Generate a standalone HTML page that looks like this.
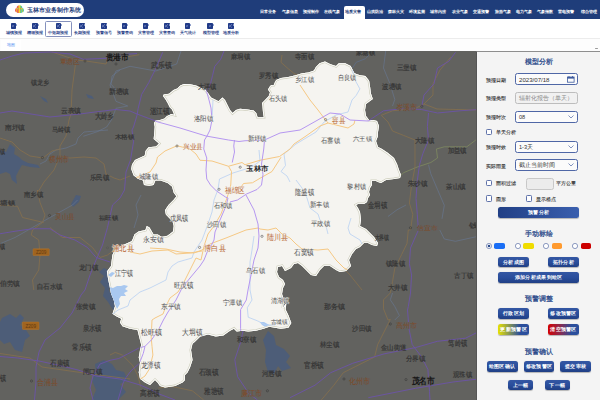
<!DOCTYPE html>
<html><head><meta charset="utf-8">
<style>
*{margin:0;padding:0;box-sizing:border-box}
html,body{width:600px;height:400px;overflow:hidden;background:#fff}
body{position:relative;font-family:"Liberation Sans",sans-serif}
.a{position:absolute;white-space:nowrap}
#hdr{left:0;top:0;width:600px;height:18.5px;background:#1f3d7a}
#pill{left:5.8px;top:2.5px;width:78.4px;height:14.2px;background:#fff;border-radius:7.1px}
#title{left:27.4px;top:6.7px;font-size:5.95px;line-height:6px;color:#1f3d7a;font-weight:bold}
.nav{top:9.1px;font-size:4.45px;line-height:5px;color:#fff;font-weight:bold}
#navact{left:343.75px;top:6px;width:21px;height:12.5px;background:#fff;border-radius:2px 2px 0 0}
#tb{left:0;top:18.5px;width:600px;height:20.5px;background:#fff;border-bottom:0.5px solid #ececec}
.ti{top:22.8px;width:5.5px;height:6.3px;background:#213b88;border-radius:0.7px}
.ti:before{content:"";position:absolute;left:5.3px;top:1.3px;width:0.9px;height:2.2px;background:#8b9cc8;border-radius:0 0.5px 0.5px 0}
.ti:after{content:"";position:absolute;left:1.2px;top:1.4px;width:2.8px;height:3.4px;background:linear-gradient(135deg,transparent 35%,#6f82bd 45%,transparent 60%),linear-gradient(45deg,transparent 35%,#5a6fb0 45%,transparent 60%)}
.tl{top:30.7px;font-size:3.75px;line-height:4.4px;color:#2b3f88;font-weight:bold;transform:translateX(-50%)}
#act{left:45.3px;top:21px;width:26.4px;height:15.7px;border:0.6px solid #8591bd;border-radius:1.5px}
#bc{left:0;top:39px;width:600px;height:12px;background:#fdfdfd}
#bct{left:1px;top:39.5px;width:20px;height:11.5px;background:#fff}
#bctx{left:7px;top:43.4px;font-size:4px;line-height:4.4px;color:#4a8af0}
#map{left:0;top:51px;width:476px;height:349px}
#panel{left:476px;top:50.6px;width:124px;height:349.4px;background:#f4f4f4;border-left:1.2px solid #555;border-top:0.9px solid #8e8e8e}
.ptitle{font-size:7px;line-height:8px;color:#2b4a8a;font-weight:normal;-webkit-text-stroke:0.25px #2b4a8a;left:524.5px}
.lbl{left:486px;font-size:5.45px;line-height:6px;color:#2e2e2e;-webkit-text-stroke:0.1px #2e2e2e}
.inp{left:515.3px;width:62.3px;height:12.2px;border:0.65px solid #4f67a6;border-radius:2.4px;background:#fbfbfb}
.itx{left:519px;font-size:5.6px;line-height:6px;color:#333}
.chev{width:5.5px;height:3px;background:none}
.cb{width:6.4px;height:6.4px;border:0.6px solid #5f72aa;border-radius:1.3px;background:#fff}
.btn{height:10.5px;border-radius:2.5px;background:linear-gradient(180deg,#3457a3 0%,#2a4e9c 50%,#203f85 100%);color:#fff;font-size:4.9px;line-height:11px;font-weight:bold;letter-spacing:0.3px;text-align:center;box-shadow:0 0.6px 0.8px rgba(0,0,0,0.25)}
.rad{width:5.6px;height:5.6px;border:0.7px solid #445c9a;border-radius:50%;background:#fff}
.sw{width:10.7px;height:6.6px;border-radius:1.8px}
.ml{font-size:4.6px;line-height:5px;color:#3a3a3a}
.mo{font-size:5.2px;line-height:6px;color:#b8612a}
</style></head><body>
<div class="a" id="hdr"></div>
<div class="a" id="pill"></div>
<svg class="a" style="left:14.5px;top:4.8px" width="9" height="8.6" viewBox="0 0 9 8.6">
<defs><linearGradient id="lg" x1="0" y1="0" x2="1" y2="0"><stop offset="0" stop-color="#d9337f"/><stop offset="0.3" stop-color="#f5932a"/><stop offset="0.5" stop-color="#f3d23a"/><stop offset="0.7" stop-color="#7fcf5a"/><stop offset="1" stop-color="#3fb3ea"/></linearGradient></defs>
<g fill="url(#lg)"><circle cx="4.5" cy="3" r="2.8"/><circle cx="2.2" cy="5.2" r="2.2"/><circle cx="6.8" cy="5.2" r="2.2"/><rect x="2.2" y="4" width="4.6" height="4.3" rx="1"/></g>
</svg>
<div class="a" id="title">玉林市业务制作系统</div>
<div class="a" id="navact"></div>
<div class="a nav" style="left:260.2px">日常业务</div>
<div class="a nav" style="left:282px">气象信息</div>
<div class="a nav" style="left:302.7px">预报制作</div>
<div class="a nav" style="left:324px">在线气象</div>
<div class="a nav" style="left:345.3px;color:#1f3d7a">地质灾害</div>
<div class="a nav" style="left:367px">山洪防治</div>
<div class="a nav" style="left:388px">森林火灾</div>
<div class="a nav" style="left:409.3px">环境监测</div>
<div class="a nav" style="left:430px">城市内涝</div>
<div class="a nav" style="left:452px">农业气象</div>
<div class="a nav" style="left:473px">交通预警</div>
<div class="a nav" style="left:495px">旅游气象</div>
<div class="a nav" style="left:516px">电力气象</div>
<div class="a nav" style="left:537px">气象指数</div>
<div class="a nav" style="left:558px">雷电预警</div>
<div class="a nav" style="left:580.5px">综合管理</div>
<div class="a" id="tb"></div>
<div class="a" id="act"></div>
<div class="a ti" style="left:10.5px"></div><div class="a tl" style="left:13.7px">城镇预报</div>
<div class="a ti" style="left:32.3px"></div><div class="a tl" style="left:35px">精细预报</div>
<div class="a ti" style="left:55.7px"></div><div class="a tl" style="left:58.3px">中短期预报</div>
<div class="a ti" style="left:79px"></div><div class="a tl" style="left:82px">长期预报</div>
<div class="a ti" style="left:101px"></div><div class="a tl" style="left:103.5px">预警信号</div>
<div class="a ti" style="left:121.5px"></div><div class="a tl" style="left:124.5px">预警查询</div>
<div class="a ti" style="left:142.5px"></div><div class="a tl" style="left:145.5px">灾害管理</div>
<div class="a ti" style="left:164px"></div><div class="a tl" style="left:167px">灾害查询</div>
<div class="a ti" style="left:184.5px"></div><div class="a tl" style="left:187.5px">天气统计</div>
<div class="a ti" style="left:207.4px"></div><div class="a tl" style="left:210.5px">模型管理</div>
<div class="a ti" style="left:228px"></div><div class="a tl" style="left:231px">地质分析</div>
<div class="a" id="bc"></div>
<div class="a" id="bct"></div>
<div class="a" id="bctx">地图</div>
<div class="a" style="left:594.5px;top:48px;width:3px;height:1.4px;background:#9a9a9a;border-radius:0.5px"></div>
<svg class="a" id="map" viewBox="0 51 476 349">
<rect x="0" y="51" width="476" height="349" fill="#62625f"/>
<polygon points="10,144 15,148 14,154 19,157 22,160 28,163 38,165 40,168 30,167 22,165 19,170 16,176 17,184 12,180 10,174 6,172 0,174 0,150 6,152" fill="#4d5d78"/>
<polygon points="2,318 10,314 16,318 20,314 24,318 20,325 26,330 30,336 25,340 22,352 15,350 10,342 4,344 0,340 0,322" fill="#4d5d78"/>
<polygon points="95,364 104,360 112,364 116,370 124,372 128,380 120,384 126,392 118,400 92,400 96,390 92,380 96,372" fill="#4d5d78"/>
<polygon points="268,331 274,336 276,345 284,349 290,356 286,362 291,368 282,371 278,366 274,374 268,372 265,362 266,350 263,340" fill="#4d5d78"/>
<polygon points="76,195 81,196 79,202 73,207 71,204" fill="#4d5d78"/>
<polygon points="40,96 46,99 48,103 44,101" fill="#4d5d78"/>
<polygon points="86,94 92,96 94,99 88,98" fill="#4d5d78"/>
<polygon points="104,268 108,270 107,276 111,282 109,290 112,298 116,305 118,312 113,310 108,302 103,296 105,288 100,282 104,276 99,272" fill="#4d5d78"/>
<polygon points="125,284 131,290 128,300 120,304 112,302 110,294" fill="#4d5d78"/>
<path d="M120 70 L112 76 L111 84 L116 90" fill="none" stroke="#687996" stroke-width="0.6" stroke-linejoin="round" opacity="1"/>
<path d="M181.3 50 L176.7 64 L155.7 71 L130 66.3 L116 71 L110 85 L116 101.3 L127.7 106 L116 108.3 L111.3 120 L106.7 127 L97.3 131.7 L83.3 136.3" fill="none" stroke="#687996" stroke-width="0.6" stroke-linejoin="round" opacity="1"/>
<path d="M108 130 L84 132 L78 138 L76 144 L66 148 L56 150 L50 154 L46 161 L40 164" fill="none" stroke="#687996" stroke-width="0.6" stroke-linejoin="round" opacity="1"/>
<path d="M77.5 200 L72.5 205 L50 217.5 L32.5 227.5 L15 237.5 L0 243.75" fill="none" stroke="#687996" stroke-width="0.6" stroke-linejoin="round" opacity="1"/>
<path d="M385.8 50 L383.5 68 L390 83.8 L394.8 99.5 L392.5 106" fill="none" stroke="#687996" stroke-width="0.6" stroke-linejoin="round" opacity="1"/>
<path d="M428.5 164.8 L430.8 173.8 L437.5 189.5 L444.3 205.3 L442 218.8" fill="none" stroke="#687996" stroke-width="0.6" stroke-linejoin="round" opacity="1"/>
<path d="M406 205 L397 209.8 L388 216.5" fill="none" stroke="#687996" stroke-width="0.6" stroke-linejoin="round" opacity="1"/>
<path d="M439.8 230 L444.3 239 L455.5 241.3 L475.8 236.8" fill="none" stroke="#687996" stroke-width="0.6" stroke-linejoin="round" opacity="1"/>
<path d="M392.5 293 L390.3 299.8 L394.8 306.5 L399.3 315.5 L394.8 320" fill="none" stroke="#687996" stroke-width="0.6" stroke-linejoin="round" opacity="1"/>
<path d="M141 195 L136 205 L138 215 L134 228" fill="none" stroke="#687996" stroke-width="0.6" stroke-linejoin="round" opacity="1"/>
<path d="M475.8 140 L466.8 146.8 L444.3 146.8 L436.4 149 L437.5 158 L430.8 162.5 L417.3 167 L403.8 172.6 L398 178" fill="none" stroke="#7f8a60" stroke-width="0.8" stroke-linejoin="round" opacity="1"/>
<path d="M282 55 L281 62.3 L288.3 68.8 L293.9 73.3 L299.4 76.1" fill="none" stroke="#87704c" stroke-width="0.8" stroke-linejoin="round" opacity="1"/>
<path d="M352.6 67.8 L356.2 62.3 L365.4 58.7 L369.1 55" fill="none" stroke="#5f6f88" stroke-width="0.8" stroke-linejoin="round" opacity="1"/>
<path d="M52 52 L76 60 L86 61 L106 64 L108 58 L120 58 L139.3 54.7" fill="none" stroke="#87704c" stroke-width="0.8" stroke-linejoin="round" opacity="1"/>
<path d="M76 60 L72 90 L71 114 L69 120 L66 136 L60 146 L60 156 L54 170 L44 182 L38 192 L37.5 190 L40 202.5 L45 215 L42.5 222.5 L32.5 230 L31.25 235 L38.75 240 L40 255 L38.75 270 L32.5 280 L33.75 290" fill="none" stroke="#87704c" stroke-width="0.8" stroke-linejoin="round" opacity="1"/>
<path d="M0 138 L12 142 L20 150 L30 156 L43 158 L52 151 L60 149" fill="none" stroke="#87704c" stroke-width="0.8" stroke-linejoin="round" opacity="1"/>
<path d="M60 156 L70 158 L84 157 L96 158 L104 164 L106 174 L114 178 L120 180 L130 176" fill="none" stroke="#87704c" stroke-width="0.8" stroke-linejoin="round" opacity="1"/>
<path d="M0 205 L17.5 206.25 L22.5 217.5 L43.75 222.5" fill="none" stroke="#87704c" stroke-width="0.8" stroke-linejoin="round" opacity="1"/>
<path d="M50 227.5 L62.5 237.5 L80 237.5 L92.5 247.5 L100 257.5 L107.5 255 L117.5 247.5" fill="none" stroke="#87704c" stroke-width="0.8" stroke-linejoin="round" opacity="1"/>
<path d="M0 353.5 L30 358 L42 367 L84 373 L130 379" fill="none" stroke="#87704c" stroke-width="0.8" stroke-linejoin="round" opacity="1"/>
<path d="M158.3 388 L172.5 386.6 L192.3 390.8 L203.7 400" fill="none" stroke="#87704c" stroke-width="0.8" stroke-linejoin="round" opacity="1"/>
<path d="M110 355 L115.25 352.4 L122.25 355 L132.8 365.5 L138 376 L140.6 386.5" fill="none" stroke="#87704c" stroke-width="0.8" stroke-linejoin="round" opacity="1"/>
<path d="M451 56.8 L439.8 70.3 L433 83.8 L433 95 L424 104 L415 108.5 L392.5 110.8 L381.3 115.3 L388 122 L392.5 131 L403.8 135.5 L415 140 L415 167 L411.6 185 L409.4 203 L412.8 214.3 L410.5 230 L408.3 230 L407 243.5 L401.5 254.8 L394.8 268.3 L392.5 281.8 L390.3 293 L383.5 299.8 L383.5 308.8 L388 320 L390.3 319.4 L384 332 L377.7 344.5 L374.6 357 L355.8 366.4 L343.3 372.7 L333.9 385.2 L321.3 400" fill="none" stroke="#87704c" stroke-width="0.8" stroke-linejoin="round" opacity="1"/>
<path d="M424 104 L437 109 L478 110" fill="none" stroke="#87704c" stroke-width="0.8" stroke-linejoin="round" opacity="1"/>
<path d="M336 260 L350 275 L362 290" fill="none" stroke="#87704c" stroke-width="0.8" stroke-linejoin="round" opacity="1"/>
<path d="M0 60 L12 56 L24 53 L50 52 L70 54 L83.3 59.3 L106.7 58.2 L120.7 54.7 L137 53.5" fill="none" stroke="#6c54a8" stroke-width="0.9" stroke-linejoin="round" opacity="1"/>
<path d="M162.7 52.3 L155.7 68.7 L148.7 82.7 L141.7 94.3 L138.2 108.3 L137 115.3 L133.5 127 L132 130 L133.5 142 L130.5 160 L126 172 L124.5 190 L120 198 L112.5 205 L107.5 227.5 L102.5 245 L95 262.5 L90 275 L85 290 L81 295 L72 313 L60 328 L45 340 L39 352 L36 367 L36 382 L34.5 400" fill="none" stroke="#6c54a8" stroke-width="0.9" stroke-linejoin="round" opacity="1"/>
<path d="M224 51 L220.7 59.3 L214.8 66.3 L212.5 75.7 L210.2 85 L206.5 91 L209 100" fill="none" stroke="#6c54a8" stroke-width="0.9" stroke-linejoin="round" opacity="1"/>
<path d="M0 113 L12 111 L50 117 L80 114 L95 112 L116 109.5 L130 111 L137 114 L153 120 L200 134" fill="none" stroke="#6c54a8" stroke-width="0.9" stroke-linejoin="round" opacity="1"/>
<path d="M0 233.75 L15 231.25 L32.5 228.75 L50 228.75 L60 235 L75 240 L87.5 247.5 L96.25 257.5 L110 262" fill="none" stroke="#6c54a8" stroke-width="0.9" stroke-linejoin="round" opacity="1"/>
<path d="M0 356.5 L18 358 L39 361 L60 365.5 L78 370 L96 376 L120 379 L140 385 L147 388 L158.3 393.7 L175 400" fill="none" stroke="#6c54a8" stroke-width="0.9" stroke-linejoin="round" opacity="1"/>
<path d="M139 348 L127.5 354 L118.8 358.5 L110 360.3 L100 364 L93 376 L90 388 L93 400" fill="none" stroke="#6c54a8" stroke-width="0.9" stroke-linejoin="round" opacity="1"/>
<path d="M138.9 363.8 L131 370.8 L125.8 377.8 L123.1 383 L118 400" fill="none" stroke="#6c54a8" stroke-width="0.9" stroke-linejoin="round" opacity="1"/>
<path d="M243 331 L240.5 342.7 L234.8 359.7 L237.6 376.7 L249 393.7 L257.5 400" fill="none" stroke="#6c54a8" stroke-width="0.9" stroke-linejoin="round" opacity="1"/>
<path d="M370 119.8 L383.5 110.8 L403.8 108.5 L421.8 109.6 L437.5 113 L460 110.8 L478 109.6" fill="none" stroke="#6c54a8" stroke-width="0.9" stroke-linejoin="round" opacity="1"/>
<path d="M455.5 52.3 L448.8 61.3 L437.5 68 L434 83.8 L424 95 L421.8 106.3" fill="none" stroke="#6c54a8" stroke-width="0.9" stroke-linejoin="round" opacity="1"/>
<path d="M428.5 113 L427.4 126.5 L428.5 140 L422.9 153.5 L419.5 164.8 L417.3 180.5 L416 198.5 L417.3 214.3 L418.4 230 L410.5 248 L409.4 263.8 L411.6 275 L410.5 293 L408.3 306.5 L407.5 310 L409 328.8 L412.2 344.5 L421.6 357 L427.9 369.5 L429.5 391.5 L430 400" fill="none" stroke="#6c54a8" stroke-width="0.9" stroke-linejoin="round" opacity="1"/>
<path d="M290 397.7 L315 385.2 L330.7 372.7 L352.7 363.3 L384 353.9 L415.4 347.6 L437.3 341.3 L465.5 338.2 L478 332" fill="none" stroke="#6c54a8" stroke-width="0.9" stroke-linejoin="round" opacity="1"/>
<path d="M368.3 397.7 L415.4 388.3 L453 382 L478 379" fill="none" stroke="#6c54a8" stroke-width="0.9" stroke-linejoin="round" opacity="1"/>
<polygon points="154.5,130 154.75,126.75 154,123 155.5,120.75 160,120 164.5,118.5 166.75,116.25 171.25,114 174.25,114.75 172,109.5 169.75,107.25 167.5,102.75 165.25,99 163,96 163.75,94.5 169,93.75 173.5,90 177.25,88.5 180.25,85.5 184,84 190,84.3 196,85.5 200.5,87.75 205,89.25 208,93 211,97.5 215.5,99.75 218.5,101.25 220.75,99 222.5,97.5 225,100 227.5,105 230,110 232.5,113 236,110 240,108.75 247.5,109.4 253.75,110.6 256.25,113 257.5,116.9 263.75,116.9 263,112.5 262.5,106 262,103 265,100 268.75,96 270,92.5 268,89.4 270,86.25 271.25,85 273.75,85 275,81.9 276.25,80 281,77.9 288.3,77 295.7,75.2 302.1,73.3 308.5,72.4 314,70.6 315.9,66.9 319.5,63.3 325,61.4 330.5,64.2 336,66 338.8,63.3 345.2,63.3 350.7,66 352.6,69.7 354.4,73.3 359.9,75.2 365.4,76.1 369.1,80.7 370,86.2 370.9,93.5 372.8,99 370,101 366,104 365,110 366,116 369,120 373,120 377,121 379,126 378,132 378,136 376,141 378,147 382,149 388,153 394,158 397,164 399,170 401,175 400,178 394,179 386,180 381,183 378,182 376,181 372,181 372,185 370,188 369,192 370,195 368,198 367,202 364,204 358,204 356,205 358,208 360,212 361,220 360,226 366,229 370,233 374,237 378,243 377,246 372,245 368,243 364,243 360,247 356,249 352,254 349,260 351,266 346,271 340,272 336,270 330,266 324,266 320,270 316,276 311,275 306,270 302,266 298,263 294,264 291,268 285,271 282,266 278,267 277,272 279,277 283,280 285,284 283,288 282,294 284,300 283,308 286.5,302 285.6,309.6 288.4,315.3 291.3,323 288.4,327.8 280.8,328.7 275,327.8 269.3,326.8 263.5,328.7 255.9,330.7 248.2,331.6 242.5,330.7 236.7,331.6 233.9,328.7 230,330.7 223.3,335.4 215.7,336.4 208,334.5 200.3,336.4 194.6,342 192.5,343.75 191,350 192.5,360 190,367.5 187.5,372.5 185,375 185,380 182.5,382.5 175,386 165,387.5 160,386 157.5,382.5 155,380 150,385 145,382.5 140,378.75 138.75,372.5 140,362.5 138.75,357.5 140,350 141.25,345 140,340 138.75,335 137.5,330 130,328.75 122.5,326.25 120,322.5 121.25,318.75 116.25,316.25 112.5,313.75 113.75,310 115,306.25 113.75,300 111,293.5 110,288 108.25,279.75 106.9,271.5 111,266 112.4,255 115,249.5 122,245.4 131.6,241.25 133,238.5 134.4,234.4 138.5,231.6 145.4,230 146.75,226 149.5,227.5 153.6,234.4 157.75,234.4 161.9,237 167.4,235.75 173,231.6 173.75,226 172.9,222.5 170.25,219 165.9,214.6 165,210.25 168.5,205 173.75,199.75 176.4,196.25 173.75,192.75 172,186.6 167.6,183.1 160.6,180.5 155.4,180.5 153.6,184.9 149.25,185.75 144,184.9 143.1,180.5 137.9,178.75 133.5,175.25 131.25,169 132,164.5 135,160 144.75,155.5 145.5,151 148.5,147.25 156,146.5 159,143.5 153.7,139" fill="#f5f4f0"/>
<clipPath id="cp"><polygon points="154.5,130 154.75,126.75 154,123 155.5,120.75 160,120 164.5,118.5 166.75,116.25 171.25,114 174.25,114.75 172,109.5 169.75,107.25 167.5,102.75 165.25,99 163,96 163.75,94.5 169,93.75 173.5,90 177.25,88.5 180.25,85.5 184,84 190,84.3 196,85.5 200.5,87.75 205,89.25 208,93 211,97.5 215.5,99.75 218.5,101.25 220.75,99 222.5,97.5 225,100 227.5,105 230,110 232.5,113 236,110 240,108.75 247.5,109.4 253.75,110.6 256.25,113 257.5,116.9 263.75,116.9 263,112.5 262.5,106 262,103 265,100 268.75,96 270,92.5 268,89.4 270,86.25 271.25,85 273.75,85 275,81.9 276.25,80 281,77.9 288.3,77 295.7,75.2 302.1,73.3 308.5,72.4 314,70.6 315.9,66.9 319.5,63.3 325,61.4 330.5,64.2 336,66 338.8,63.3 345.2,63.3 350.7,66 352.6,69.7 354.4,73.3 359.9,75.2 365.4,76.1 369.1,80.7 370,86.2 370.9,93.5 372.8,99 370,101 366,104 365,110 366,116 369,120 373,120 377,121 379,126 378,132 378,136 376,141 378,147 382,149 388,153 394,158 397,164 399,170 401,175 400,178 394,179 386,180 381,183 378,182 376,181 372,181 372,185 370,188 369,192 370,195 368,198 367,202 364,204 358,204 356,205 358,208 360,212 361,220 360,226 366,229 370,233 374,237 378,243 377,246 372,245 368,243 364,243 360,247 356,249 352,254 349,260 351,266 346,271 340,272 336,270 330,266 324,266 320,270 316,276 311,275 306,270 302,266 298,263 294,264 291,268 285,271 282,266 278,267 277,272 279,277 283,280 285,284 283,288 282,294 284,300 283,308 286.5,302 285.6,309.6 288.4,315.3 291.3,323 288.4,327.8 280.8,328.7 275,327.8 269.3,326.8 263.5,328.7 255.9,330.7 248.2,331.6 242.5,330.7 236.7,331.6 233.9,328.7 230,330.7 223.3,335.4 215.7,336.4 208,334.5 200.3,336.4 194.6,342 192.5,343.75 191,350 192.5,360 190,367.5 187.5,372.5 185,375 185,380 182.5,382.5 175,386 165,387.5 160,386 157.5,382.5 155,380 150,385 145,382.5 140,378.75 138.75,372.5 140,362.5 138.75,357.5 140,350 141.25,345 140,340 138.75,335 137.5,330 130,328.75 122.5,326.25 120,322.5 121.25,318.75 116.25,316.25 112.5,313.75 113.75,310 115,306.25 113.75,300 111,293.5 110,288 108.25,279.75 106.9,271.5 111,266 112.4,255 115,249.5 122,245.4 131.6,241.25 133,238.5 134.4,234.4 138.5,231.6 145.4,230 146.75,226 149.5,227.5 153.6,234.4 157.75,234.4 161.9,237 167.4,235.75 173,231.6 173.75,226 172.9,222.5 170.25,219 165.9,214.6 165,210.25 168.5,205 173.75,199.75 176.4,196.25 173.75,192.75 172,186.6 167.6,183.1 160.6,180.5 155.4,180.5 153.6,184.9 149.25,185.75 144,184.9 143.1,180.5 137.9,178.75 133.5,175.25 131.25,169 132,164.5 135,160 144.75,155.5 145.5,151 148.5,147.25 156,146.5 159,143.5 153.7,139"/></clipPath><g clip-path="url(#cp)">
<polygon points="154.5,130 154.75,126.75 154,123 155.5,120.75 160,120 164.5,118.5 166.75,116.25 171.25,114 174.25,114.75 172,109.5 169.75,107.25 167.5,102.75 165.25,99 163,96 163.75,94.5 169,93.75 173.5,90 177.25,88.5 180.25,85.5 184,84 190,84.3 196,85.5 200.5,87.75 205,89.25 208,93 211,97.5 215.5,99.75 218.5,101.25 220.75,99 222.5,97.5 225,100 227.5,105 230,110 232.5,113 236,110 240,108.75 247.5,109.4 253.75,110.6 256.25,113 257.5,116.9 263.75,116.9 263,112.5 262.5,106 262,103 265,100 268.75,96 270,92.5 268,89.4 270,86.25 271.25,85 273.75,85 275,81.9 276.25,80 281,77.9 288.3,77 295.7,75.2 302.1,73.3 308.5,72.4 314,70.6 315.9,66.9 319.5,63.3 325,61.4 330.5,64.2 336,66 338.8,63.3 345.2,63.3 350.7,66 352.6,69.7 354.4,73.3 359.9,75.2 365.4,76.1 369.1,80.7 370,86.2 370.9,93.5 372.8,99 370,101 366,104 365,110 366,116 369,120 373,120 377,121 379,126 378,132 378,136 376,141 378,147 382,149 388,153 394,158 397,164 399,170 401,175 400,178 394,179 386,180 381,183 378,182 376,181 372,181 372,185 370,188 369,192 370,195 368,198 367,202 364,204 358,204 356,205 358,208 360,212 361,220 360,226 366,229 370,233 374,237 378,243 377,246 372,245 368,243 364,243 360,247 356,249 352,254 349,260 351,266 346,271 340,272 336,270 330,266 324,266 320,270 316,276 311,275 306,270 302,266 298,263 294,264 291,268 285,271 282,266 278,267 277,272 279,277 283,280 285,284 283,288 282,294 284,300 283,308 286.5,302 285.6,309.6 288.4,315.3 291.3,323 288.4,327.8 280.8,328.7 275,327.8 269.3,326.8 263.5,328.7 255.9,330.7 248.2,331.6 242.5,330.7 236.7,331.6 233.9,328.7 230,330.7 223.3,335.4 215.7,336.4 208,334.5 200.3,336.4 194.6,342 192.5,343.75 191,350 192.5,360 190,367.5 187.5,372.5 185,375 185,380 182.5,382.5 175,386 165,387.5 160,386 157.5,382.5 155,380 150,385 145,382.5 140,378.75 138.75,372.5 140,362.5 138.75,357.5 140,350 141.25,345 140,340 138.75,335 137.5,330 130,328.75 122.5,326.25 120,322.5 121.25,318.75 116.25,316.25 112.5,313.75 113.75,310 115,306.25 113.75,300 111,293.5 110,288 108.25,279.75 106.9,271.5 111,266 112.4,255 115,249.5 122,245.4 131.6,241.25 133,238.5 134.4,234.4 138.5,231.6 145.4,230 146.75,226 149.5,227.5 153.6,234.4 157.75,234.4 161.9,237 167.4,235.75 173,231.6 173.75,226 172.9,222.5 170.25,219 165.9,214.6 165,210.25 168.5,205 173.75,199.75 176.4,196.25 173.75,192.75 172,186.6 167.6,183.1 160.6,180.5 155.4,180.5 153.6,184.9 149.25,185.75 144,184.9 143.1,180.5 137.9,178.75 133.5,175.25 131.25,169 132,164.5 135,160 144.75,155.5 145.5,151 148.5,147.25 156,146.5 159,143.5 153.7,139" fill="none" stroke="#cfcfbd" stroke-width="3.0"/>
<polygon points="154.5,130 154.75,126.75 154,123 155.5,120.75 160,120 164.5,118.5 166.75,116.25 171.25,114 174.25,114.75 172,109.5 169.75,107.25 167.5,102.75 165.25,99 163,96 163.75,94.5 169,93.75 173.5,90 177.25,88.5 180.25,85.5 184,84 190,84.3 196,85.5 200.5,87.75 205,89.25 208,93 211,97.5 215.5,99.75 218.5,101.25 220.75,99 222.5,97.5 225,100 227.5,105 230,110 232.5,113 236,110 240,108.75 247.5,109.4 253.75,110.6 256.25,113 257.5,116.9 263.75,116.9 263,112.5 262.5,106 262,103 265,100 268.75,96 270,92.5 268,89.4 270,86.25 271.25,85 273.75,85 275,81.9 276.25,80 281,77.9 288.3,77 295.7,75.2 302.1,73.3 308.5,72.4 314,70.6 315.9,66.9 319.5,63.3 325,61.4 330.5,64.2 336,66 338.8,63.3 345.2,63.3 350.7,66 352.6,69.7 354.4,73.3 359.9,75.2 365.4,76.1 369.1,80.7 370,86.2 370.9,93.5 372.8,99 370,101 366,104 365,110 366,116 369,120 373,120 377,121 379,126 378,132 378,136 376,141 378,147 382,149 388,153 394,158 397,164 399,170 401,175 400,178 394,179 386,180 381,183 378,182 376,181 372,181 372,185 370,188 369,192 370,195 368,198 367,202 364,204 358,204 356,205 358,208 360,212 361,220 360,226 366,229 370,233 374,237 378,243 377,246 372,245 368,243 364,243 360,247 356,249 352,254 349,260 351,266 346,271 340,272 336,270 330,266 324,266 320,270 316,276 311,275 306,270 302,266 298,263 294,264 291,268 285,271 282,266 278,267 277,272 279,277 283,280 285,284 283,288 282,294 284,300 283,308 286.5,302 285.6,309.6 288.4,315.3 291.3,323 288.4,327.8 280.8,328.7 275,327.8 269.3,326.8 263.5,328.7 255.9,330.7 248.2,331.6 242.5,330.7 236.7,331.6 233.9,328.7 230,330.7 223.3,335.4 215.7,336.4 208,334.5 200.3,336.4 194.6,342 192.5,343.75 191,350 192.5,360 190,367.5 187.5,372.5 185,375 185,380 182.5,382.5 175,386 165,387.5 160,386 157.5,382.5 155,380 150,385 145,382.5 140,378.75 138.75,372.5 140,362.5 138.75,357.5 140,350 141.25,345 140,340 138.75,335 137.5,330 130,328.75 122.5,326.25 120,322.5 121.25,318.75 116.25,316.25 112.5,313.75 113.75,310 115,306.25 113.75,300 111,293.5 110,288 108.25,279.75 106.9,271.5 111,266 112.4,255 115,249.5 122,245.4 131.6,241.25 133,238.5 134.4,234.4 138.5,231.6 145.4,230 146.75,226 149.5,227.5 153.6,234.4 157.75,234.4 161.9,237 167.4,235.75 173,231.6 173.75,226 172.9,222.5 170.25,219 165.9,214.6 165,210.25 168.5,205 173.75,199.75 176.4,196.25 173.75,192.75 172,186.6 167.6,183.1 160.6,180.5 155.4,180.5 153.6,184.9 149.25,185.75 144,184.9 143.1,180.5 137.9,178.75 133.5,175.25 131.25,169 132,164.5 135,160 144.75,155.5 145.5,151 148.5,147.25 156,146.5 159,143.5 153.7,139" fill="none" stroke="#ffffff" stroke-width="1.7"/>
<polygon points="109,287 113,288 117,286 121,286 124,285 128,286 125,289 128,291 124,293 126,296 121,296 119,299 120,304 117,309 115,304 112,299 108,296" fill="#a9c8f0"/>
<polygon points="108,275 112,272 115,273 111,277" fill="#a9c8f0"/>
<polygon points="259.7,322 264,322 269.3,325 265,326.8 262,325" fill="#a9c8f0"/>
<path d="M352.6 69.7 L354.4 78.9 L359.9 88.9 L356.2 95.4 L352 100 L348 112 L336 115 L324 122 L316 132 L296 144 L284 154 L285.5 165.5 L281 171.5 L287 176 L290 182" fill="none" stroke="#b7d0f2" stroke-width="0.8" stroke-linejoin="round" opacity="1"/>
<path d="M259 150 L260 161 L252 167 L245 169.25 L233 173 L219.5 179 L218 189.5 L214 200 L212 212 L208 224 L202 240 L194 252 L192 258 L178 262 L172 266 L168 272 L166 280 L150 288 L140 292 L130 300 L128 306 L118 310 L110 316" fill="none" stroke="#b7d0f2" stroke-width="0.8" stroke-linejoin="round" opacity="1"/>
<path d="M296 180 L302 188 L307 198 L310 208 L318 214 L320 220 L326 226 L328 234" fill="none" stroke="#b7d0f2" stroke-width="0.8" stroke-linejoin="round" opacity="1"/>
<path d="M351 218 L348 228 L350 234 L360 240 L362 244" fill="none" stroke="#b7d0f2" stroke-width="0.8" stroke-linejoin="round" opacity="1"/>
<path d="M254 236 L252 250 L250 262 L250 290 L252 300 L247.3 307.7 L248.2 317.2 L257.8 321 L265.5 324.9 L275 324.9" fill="none" stroke="#b7d0f2" stroke-width="0.8" stroke-linejoin="round" opacity="1"/>
<path d="M213 100 L212 120" fill="none" stroke="#b7d0f2" stroke-width="0.8" stroke-linejoin="round" opacity="1"/>
<path d="M120 181 L135 178 L139.5 176.5 L150 172 L156 163 L157.5 157 L165 151 L177 145.75 L190 149 L196 154 L200 160.25 L212 161 L228.5 166.25 L231.5 171.5 L230.75 185 L229.25 191 L226.25 200 L221 214 L214 226 L208 234 L204 246 L201 260 L196 258 L190 270 L184 282 L178 292 L170 298 L166 306 L163 314 L155 318 L152 320 L151.2 337.5 L152 346.3 L152.9 355 L149.4 369 L145 376 L139.8 379.5" fill="none" stroke="#f5c884" stroke-width="1.0" stroke-linejoin="round" opacity="1"/>
<path d="M228.5 166.25 L242 162.5 L245 164.75 L260 160.25 L279.5 156.5 L290 149 L294 144 L306 136 L320 126 L328 123 L348 128 L354 124 L355 120" fill="none" stroke="#f5c884" stroke-width="1.0" stroke-linejoin="round" opacity="1"/>
<path d="M328 123 L324 118 L318 110 L310 100 L300 85" fill="none" stroke="#f5c884" stroke-width="1.0" stroke-linejoin="round" opacity="1"/>
<path d="M281 157.25 L272 171.5 L260 178.25 L252.5 182.75 L243.5 183.5 L240.5 188" fill="none" stroke="#f5c884" stroke-width="1.0" stroke-linejoin="round" opacity="1"/>
<path d="M150 248 L166 249 L180 252 L194 253 L202 250 L210 244 L226 238 L246 230 L258 228 L260 229 L268 230 L276 228 L282 234 L290 238 L296 244 L302 249 L318 250 L328 249 L336 260 L344 268 L350 271" fill="none" stroke="#f5c884" stroke-width="1.0" stroke-linejoin="round" opacity="1"/>
<path d="M130 252 L140 254 L152 251 L168 250 L176 254 L190 253 L202 251" fill="none" stroke="#f5c884" stroke-width="1.0" stroke-linejoin="round" opacity="1"/>
<path d="M150 119 L158 122 L180 128 L206 136 L228.5 140 L239 141.5 L245 140.75 L264.5 140 L280 133 L280 133 L300 130 L316 121 L330 113 L340 114 L350 120 L368 121 L380 115" fill="none" stroke="#b597f0" stroke-width="1.0" stroke-linejoin="round" opacity="1"/>
<path d="M206.5 91 L209 100 L211 108 L212 120 L210 130 L207 136 L204.5 140 L203.75 149 L206.75 158 L206 170 L206.75 179 L210.5 185 L216.5 191 L225.5 197 L228 198 L226 206 L220 220 L215 232 L214 240 L210 248 L208 250 L204 260 L200 266 L190 278 L182 288 L176 300 L168 312 L163.4 320 L159 328.75 L152 339.3 L145 346.3 L139 348" fill="none" stroke="#b597f0" stroke-width="1.0" stroke-linejoin="round" opacity="1"/>
<path d="M145 346.3 L143.3 353.3 L140.6 360.3 L138.9 363.8" fill="none" stroke="#b597f0" stroke-width="1.0" stroke-linejoin="round" opacity="1"/>
<path d="M234.5 140 L233.75 146 L234.5 152 L232.25 162.5" fill="none" stroke="#b597f0" stroke-width="1.0" stroke-linejoin="round" opacity="1"/>
<path d="M264.5 140 L263.75 149 L261.5 164 L263 174.5 L261.5 185 L257 189.5 L246.5 194 L237.5 200 L230 202" fill="none" stroke="#b597f0" stroke-width="1.0" stroke-linejoin="round" opacity="1"/>
<path d="M246 195 L254 210 L258 224 L259 236 L258 248 L254 260 L248 290 L246.3 300 L240.6 309.6 L240.6 328.7 L242.5 349.8" fill="none" stroke="#b597f0" stroke-width="1.0" stroke-linejoin="round" opacity="1"/>
</g>
<rect x="33" y="248.75" width="16.25" height="6.75" fill="#a0641f" stroke="#c07a28" stroke-width="0.4" rx="0.6"/>
<text x="41.125" y="253.9" font-size="4.6" text-anchor="middle" fill="#603a12">Z209</text>
<rect x="22.5" y="322" width="16.5" height="7.5" fill="#a0641f" stroke="#c07a28" stroke-width="0.4" rx="0.6"/>
<text x="30.75" y="327.9" font-size="4.6" text-anchor="middle" fill="#603a12">Z209</text>
<circle cx="85" cy="61" r="1.1" fill="none" stroke="#3a3a3a" stroke-width="0.6"/>
<circle cx="116" cy="64" r="1.1" fill="none" stroke="#3a3a3a" stroke-width="0.6"/>
<circle cx="42.4" cy="157.6" r="1.1" fill="none" stroke="#3a3a3a" stroke-width="0.6"/>
<circle cx="49.5" cy="215.5" r="1.1" fill="none" stroke="#3a3a3a" stroke-width="0.6"/>
<circle cx="31.5" cy="381" r="1.1" fill="none" stroke="#3a3a3a" stroke-width="0.6"/>
<circle cx="267.4" cy="390.8" r="1.1" fill="none" stroke="#3a3a3a" stroke-width="0.6"/>
<circle cx="421.8" cy="106.3" r="1.1" fill="none" stroke="#3a3a3a" stroke-width="0.6"/>
<circle cx="410.5" cy="227.8" r="1.1" fill="none" stroke="#3a3a3a" stroke-width="0.6"/>
<circle cx="390.3" cy="324" r="1.1" fill="none" stroke="#3a3a3a" stroke-width="0.6"/>
<circle cx="344" cy="379" r="1.1" fill="none" stroke="#3a3a3a" stroke-width="0.6"/>
<circle cx="406" cy="379.6" r="1.1" fill="none" stroke="#3a3a3a" stroke-width="0.6"/>
<circle cx="177" cy="146" r="1.1" fill="none" stroke="#555" stroke-width="0.6"/>
<circle cx="240.2" cy="167.2" r="1.1" fill="none" stroke="#555" stroke-width="0.6"/>
<circle cx="219" cy="189.3" r="1.1" fill="none" stroke="#555" stroke-width="0.6"/>
<circle cx="325.6" cy="119.6" r="1.1" fill="none" stroke="#555" stroke-width="0.6"/>
<circle cx="199.6" cy="247.4" r="1.1" fill="none" stroke="#555" stroke-width="0.6"/>
<circle cx="262" cy="236.3" r="1.1" fill="none" stroke="#555" stroke-width="0.6"/>
<circle cx="107.5" cy="247.8" r="1.1" fill="none" stroke="#555" stroke-width="0.6"/>
<text x="59.5" y="64.47" font-size="7.33" textLength="20.30" lengthAdjust="spacingAndGlyphs" fill="#7e4a26" font-weight="normal" stroke="#616161" stroke-width="0.5" paint-order="stroke">覃塘区</text>
<text x="105.5" y="59.69" font-size="8.14" textLength="23.30" lengthAdjust="spacingAndGlyphs" fill="#161616" font-weight="bold" stroke="#616161" stroke-width="0.5" paint-order="stroke">贵港市</text>
<text x="151" y="67.89" font-size="8.14" textLength="20.50" lengthAdjust="spacingAndGlyphs" fill="#343434" font-weight="normal" stroke="#343434" stroke-width="0.18" paint-order="stroke">武乐镇</text>
<text x="31" y="85.30" font-size="6.98" textLength="18.00" lengthAdjust="spacingAndGlyphs" fill="#343434" font-weight="normal" stroke="#343434" stroke-width="0.18" paint-order="stroke">镇龙乡</text>
<text x="109" y="94.07" font-size="7.33" textLength="19.80" lengthAdjust="spacingAndGlyphs" fill="#343434" font-weight="normal" stroke="#343434" stroke-width="0.18" paint-order="stroke">新塘镇</text>
<text x="61" y="113.30" font-size="6.98" textLength="20.00" lengthAdjust="spacingAndGlyphs" fill="#343434" font-weight="normal" stroke="#343434" stroke-width="0.18" paint-order="stroke">云表镇</text>
<text x="94.5" y="118.74" font-size="7.56" textLength="19.20" lengthAdjust="spacingAndGlyphs" fill="#343434" font-weight="normal" stroke="#343434" stroke-width="0.18" paint-order="stroke">大岭乡</text>
<text x="5" y="130.30" font-size="6.98" textLength="20.00" lengthAdjust="spacingAndGlyphs" fill="#343434" font-weight="normal" stroke="#343434" stroke-width="0.18" paint-order="stroke">南圩镇</text>
<text x="51.6" y="131.70" font-size="6.98" textLength="18.80" lengthAdjust="spacingAndGlyphs" fill="#343434" font-weight="normal" stroke="#343434" stroke-width="0.18" paint-order="stroke">马岭镇</text>
<text x="114.8" y="139.42" font-size="5.81" textLength="19.90" lengthAdjust="spacingAndGlyphs" fill="#343434" font-weight="normal" stroke="#343434" stroke-width="0.18" paint-order="stroke">木格镇</text>
<text x="49" y="162.19" font-size="8.14" textLength="20.00" lengthAdjust="spacingAndGlyphs" fill="#7e4a26" font-weight="normal" stroke="#616161" stroke-width="0.5" paint-order="stroke">横州市</text>
<text x="89.6" y="179.70" font-size="6.98" textLength="19.40" lengthAdjust="spacingAndGlyphs" fill="#343434" font-weight="normal" stroke="#343434" stroke-width="0.18" paint-order="stroke">乐民镇</text>
<text x="24" y="197.30" font-size="6.98" textLength="19.00" lengthAdjust="spacingAndGlyphs" fill="#343434" font-weight="normal" stroke="#343434" stroke-width="0.18" paint-order="stroke">南乡镇</text>
<text x="0" y="205.42" font-size="5.81" textLength="15.00" lengthAdjust="spacingAndGlyphs" fill="#343434" font-weight="normal" stroke="#343434" stroke-width="0.18" paint-order="stroke">塘镇</text>
<text x="0" y="154.30" font-size="6.98" textLength="5.00" lengthAdjust="spacingAndGlyphs" fill="#343434" font-weight="normal" stroke="#343434" stroke-width="0.18" paint-order="stroke">镇</text>
<text x="55" y="219.27" font-size="7.27" textLength="20.00" lengthAdjust="spacingAndGlyphs" fill="#7e4a26" font-weight="normal" stroke="#616161" stroke-width="0.5" paint-order="stroke">灵山县</text>
<text x="98.75" y="219.86" font-size="6.40" textLength="19.25" lengthAdjust="spacingAndGlyphs" fill="#343434" font-weight="normal" stroke="#343434" stroke-width="0.18" paint-order="stroke">福旺镇</text>
<text x="0" y="249.30" font-size="6.98" textLength="5.00" lengthAdjust="spacingAndGlyphs" fill="#343434" font-weight="normal" stroke="#343434" stroke-width="0.18" paint-order="stroke">镇</text>
<text x="78.75" y="269.80" font-size="6.98" textLength="19.25" lengthAdjust="spacingAndGlyphs" fill="#343434" font-weight="normal" stroke="#343434" stroke-width="0.18" paint-order="stroke">龙门镇</text>
<text x="0" y="286.30" font-size="6.98" textLength="20.00" lengthAdjust="spacingAndGlyphs" fill="#343434" font-weight="normal" stroke="#343434" stroke-width="0.18" paint-order="stroke">伯劳镇</text>
<text x="37" y="289.27" font-size="7.27" textLength="25.50" lengthAdjust="spacingAndGlyphs" fill="#343434" font-weight="normal" stroke="#343434" stroke-width="0.18" paint-order="stroke">白石水镇</text>
<text x="75.6" y="308.70" font-size="6.98" textLength="19.80" lengthAdjust="spacingAndGlyphs" fill="#343434" font-weight="normal" stroke="#343434" stroke-width="0.18" paint-order="stroke">张黄镇</text>
<text x="82.5" y="330.83" font-size="7.67" textLength="18.90" lengthAdjust="spacingAndGlyphs" fill="#343434" font-weight="normal" stroke="#343434" stroke-width="0.18" paint-order="stroke">泉水镇</text>
<text x="72" y="350.33" font-size="7.67" textLength="19.50" lengthAdjust="spacingAndGlyphs" fill="#343434" font-weight="normal" stroke="#343434" stroke-width="0.18" paint-order="stroke">常乐镇</text>
<text x="50.4" y="365.60" font-size="8.02" textLength="19.20" lengthAdjust="spacingAndGlyphs" fill="#343434" font-weight="normal" stroke="#343434" stroke-width="0.18" paint-order="stroke">石康镇</text>
<text x="82.5" y="373.80" font-size="6.98" textLength="19.50" lengthAdjust="spacingAndGlyphs" fill="#343434" font-weight="normal" stroke="#343434" stroke-width="0.18" paint-order="stroke">闸口镇</text>
<text x="0" y="381.23" font-size="7.67" textLength="6.00" lengthAdjust="spacingAndGlyphs" fill="#343434" font-weight="normal" stroke="#343434" stroke-width="0.18" paint-order="stroke">镇</text>
<text x="36.6" y="384.76" font-size="8.37" textLength="21.00" lengthAdjust="spacingAndGlyphs" fill="#7e4a26" font-weight="normal" stroke="#616161" stroke-width="0.5" paint-order="stroke">合浦县</text>
<text x="140" y="396.22" font-size="7.79" textLength="19.70" lengthAdjust="spacingAndGlyphs" fill="#343434" font-weight="normal" stroke="#343434" stroke-width="0.18" paint-order="stroke">高桥镇</text>
<text x="204.2" y="394.19" font-size="8.14" textLength="19.30" lengthAdjust="spacingAndGlyphs" fill="#343434" font-weight="normal" stroke="#343434" stroke-width="0.18" paint-order="stroke">雅塘镇</text>
<text x="240.5" y="395.67" font-size="8.26" textLength="21.20" lengthAdjust="spacingAndGlyphs" fill="#7e4a26" font-weight="normal" stroke="#616161" stroke-width="0.5" paint-order="stroke">廉江市</text>
<text x="198.6" y="374.97" font-size="8.26" textLength="19.80" lengthAdjust="spacingAndGlyphs" fill="#343434" font-weight="normal" stroke="#343434" stroke-width="0.18" paint-order="stroke">石颈镇</text>
<text x="261.7" y="375.97" font-size="7.33" textLength="19.90" lengthAdjust="spacingAndGlyphs" fill="#343434" font-weight="normal" stroke="#343434" stroke-width="0.18" paint-order="stroke">河唇镇</text>
<text x="237" y="341.97" font-size="7.33" textLength="19.00" lengthAdjust="spacingAndGlyphs" fill="#343434" font-weight="normal" stroke="#343434" stroke-width="0.18" paint-order="stroke">和寮镇</text>
<text x="149.8" y="114.13" font-size="7.67" textLength="19.90" lengthAdjust="spacingAndGlyphs" fill="#343434" font-weight="normal" stroke="#343434" stroke-width="0.18" paint-order="stroke">湛江镇</text>
<text x="231" y="59.01" font-size="6.86" textLength="19.00" lengthAdjust="spacingAndGlyphs" fill="#343434" font-weight="normal" stroke="#343434" stroke-width="0.18" paint-order="stroke">麻垌镇</text>
<text x="295" y="59.01" font-size="6.86" textLength="19.00" lengthAdjust="spacingAndGlyphs" fill="#343434" font-weight="normal" stroke="#343434" stroke-width="0.18" paint-order="stroke">寺面镇</text>
<text x="259" y="77.80" font-size="6.98" textLength="19.00" lengthAdjust="spacingAndGlyphs" fill="#343434" font-weight="normal" stroke="#343434" stroke-width="0.18" paint-order="stroke">罗秀镇</text>
<text x="197.5" y="89.30" font-size="6.98" textLength="18.50" lengthAdjust="spacingAndGlyphs" fill="#343434" font-weight="normal" stroke="#343434" stroke-width="0.18" paint-order="stroke">大洋镇</text>
<text x="356" y="54.92" font-size="5.81" textLength="19.00" lengthAdjust="spacingAndGlyphs" fill="#343434" font-weight="normal" stroke="#343434" stroke-width="0.18" paint-order="stroke">家塘镇</text>
<text x="396.5" y="69.57" font-size="7.33" textLength="19.50" lengthAdjust="spacingAndGlyphs" fill="#343434" font-weight="normal" stroke="#343434" stroke-width="0.18" paint-order="stroke">三堡镇</text>
<text x="382.4" y="89.28" font-size="7.21" textLength="19.10" lengthAdjust="spacingAndGlyphs" fill="#343434" font-weight="normal" stroke="#343434" stroke-width="0.18" paint-order="stroke">波塘镇</text>
<text x="396" y="110.01" font-size="7.91" textLength="21.00" lengthAdjust="spacingAndGlyphs" fill="#7e4a26" font-weight="normal" stroke="#616161" stroke-width="0.5" paint-order="stroke">岑溪市</text>
<text x="415" y="143.30" font-size="6.98" textLength="19.00" lengthAdjust="spacingAndGlyphs" fill="#343434" font-weight="normal" stroke="#343434" stroke-width="0.18" paint-order="stroke">大隆镇</text>
<text x="447.6" y="153.30" font-size="6.98" textLength="19.20" lengthAdjust="spacingAndGlyphs" fill="#343434" font-weight="normal" stroke="#343434" stroke-width="0.18" paint-order="stroke">加益镇</text>
<text x="407.8" y="186.07" font-size="7.33" textLength="19.60" lengthAdjust="spacingAndGlyphs" fill="#343434" font-weight="normal" stroke="#343434" stroke-width="0.18" paint-order="stroke">朱砂镇</text>
<text x="446" y="189.30" font-size="6.98" textLength="19.60" lengthAdjust="spacingAndGlyphs" fill="#343434" font-weight="normal" stroke="#343434" stroke-width="0.18" paint-order="stroke">茶山镇</text>
<text x="368" y="207.83" font-size="7.67" textLength="19.00" lengthAdjust="spacingAndGlyphs" fill="#343434" font-weight="normal" stroke="#343434" stroke-width="0.18" paint-order="stroke">金垌镇</text>
<text x="417" y="230.37" font-size="6.28" textLength="20.50" lengthAdjust="spacingAndGlyphs" fill="#7e4a26" font-weight="normal" stroke="#616161" stroke-width="0.5" paint-order="stroke">信宜市</text>
<text x="469" y="228.30" font-size="6.98" textLength="9.00" lengthAdjust="spacingAndGlyphs" fill="#343434" font-weight="normal" stroke="#343434" stroke-width="0.18" paint-order="stroke">钱</text>
<text x="374.5" y="240.30" font-size="6.98" textLength="14.50" lengthAdjust="spacingAndGlyphs" fill="#343434" font-weight="normal" stroke="#343434" stroke-width="0.18" paint-order="stroke">大界镇</text>
<text x="385.8" y="265.79" font-size="7.09" textLength="19.10" lengthAdjust="spacingAndGlyphs" fill="#343434" font-weight="normal" stroke="#343434" stroke-width="0.18" paint-order="stroke">镇隆镇</text>
<text x="454.4" y="277.66" font-size="7.44" textLength="19.10" lengthAdjust="spacingAndGlyphs" fill="#343434" font-weight="normal" stroke="#343434" stroke-width="0.18" paint-order="stroke">古丁镇</text>
<text x="387.5" y="290.30" font-size="6.98" textLength="19.50" lengthAdjust="spacingAndGlyphs" fill="#343434" font-weight="normal" stroke="#343434" stroke-width="0.18" paint-order="stroke">大井镇</text>
<text x="323.6" y="308.80" font-size="6.98" textLength="21.00" lengthAdjust="spacingAndGlyphs" fill="#343434" font-weight="normal" stroke="#343434" stroke-width="0.18" paint-order="stroke">那务镇</text>
<text x="352" y="331.27" font-size="7.33" textLength="19.50" lengthAdjust="spacingAndGlyphs" fill="#343434" font-weight="normal" stroke="#343434" stroke-width="0.18" paint-order="stroke">沙田镇</text>
<text x="396" y="328.07" font-size="7.33" textLength="21.00" lengthAdjust="spacingAndGlyphs" fill="#7e4a26" font-weight="normal" stroke="#616161" stroke-width="0.5" paint-order="stroke">高州市</text>
<text x="319.8" y="346.87" font-size="7.33" textLength="19.40" lengthAdjust="spacingAndGlyphs" fill="#343434" font-weight="normal" stroke="#343434" stroke-width="0.18" paint-order="stroke">林尘镇</text>
<text x="380.9" y="349.98" font-size="7.21" textLength="25.70" lengthAdjust="spacingAndGlyphs" fill="#343434" font-weight="normal" stroke="#343434" stroke-width="0.18" paint-order="stroke">金山街道</text>
<text x="448.3" y="345.90" font-size="8.02" textLength="18.70" lengthAdjust="spacingAndGlyphs" fill="#343434" font-weight="normal" stroke="#343434" stroke-width="0.18" paint-order="stroke">笃岭镇</text>
<text x="406" y="360.97" font-size="7.33" textLength="19.40" lengthAdjust="spacingAndGlyphs" fill="#343434" font-weight="normal" stroke="#343434" stroke-width="0.18" paint-order="stroke">分界镇</text>
<text x="304" y="368.15" font-size="8.49" textLength="19.80" lengthAdjust="spacingAndGlyphs" fill="#343434" font-weight="normal" stroke="#343434" stroke-width="0.18" paint-order="stroke">官桥镇</text>
<text x="453" y="376.66" font-size="7.44" textLength="18.80" lengthAdjust="spacingAndGlyphs" fill="#343434" font-weight="normal" stroke="#343434" stroke-width="0.18" paint-order="stroke">观珠镇</text>
<text x="349" y="383.50" font-size="8.02" textLength="21.00" lengthAdjust="spacingAndGlyphs" fill="#7e4a26" font-weight="normal" stroke="#616161" stroke-width="0.5" paint-order="stroke">化州市</text>
<text x="411.6" y="384.29" font-size="9.07" textLength="23.20" lengthAdjust="spacingAndGlyphs" fill="#161616" font-weight="bold" stroke="#616161" stroke-width="0.5" paint-order="stroke">茂名市</text>
<text x="295" y="82.30" font-size="6.98" textLength="19.00" lengthAdjust="spacingAndGlyphs" fill="#4e4e4e" font-weight="normal" stroke="#f3f2ee" stroke-width="0.5" paint-order="stroke">乡江镇</text>
<text x="269" y="100.80" font-size="6.98" textLength="18.50" lengthAdjust="spacingAndGlyphs" fill="#4e4e4e" font-weight="normal" stroke="#f3f2ee" stroke-width="0.5" paint-order="stroke">石头镇</text>
<text x="337.5" y="79.80" font-size="6.98" textLength="18.50" lengthAdjust="spacingAndGlyphs" fill="#4e4e4e" font-weight="normal" stroke="#f3f2ee" stroke-width="0.5" paint-order="stroke">自良镇</text>
<text x="193.6" y="120.95" font-size="6.51" textLength="19.40" lengthAdjust="spacingAndGlyphs" fill="#4e4e4e" font-weight="normal" stroke="#f3f2ee" stroke-width="0.5" paint-order="stroke">洛阳镇</text>
<text x="183" y="149.26" font-size="7.44" textLength="20.00" lengthAdjust="spacingAndGlyphs" fill="#b8652e" font-weight="normal" stroke="#f3f2ee" stroke-width="0.5" paint-order="stroke">兴业县</text>
<text x="247.6" y="141.30" font-size="6.98" textLength="18.80" lengthAdjust="spacingAndGlyphs" fill="#4e4e4e" font-weight="normal" stroke="#f3f2ee" stroke-width="0.5" paint-order="stroke">新圩镇</text>
<text x="246" y="171.46" font-size="7.44" textLength="22.50" lengthAdjust="spacingAndGlyphs" fill="#2a2a2a" font-weight="bold" stroke="#ffffff" stroke-width="0.5" paint-order="stroke">玉林市</text>
<text x="139" y="179.10" font-size="6.98" textLength="19.00" lengthAdjust="spacingAndGlyphs" fill="#4e4e4e" font-weight="normal" stroke="#f3f2ee" stroke-width="0.5" paint-order="stroke">城隆镇</text>
<text x="225" y="193.19" font-size="8.14" textLength="20.00" lengthAdjust="spacingAndGlyphs" fill="#b8652e" font-weight="normal" stroke="#f3f2ee" stroke-width="0.5" paint-order="stroke">福绵区</text>
<text x="295" y="194.83" font-size="7.67" textLength="19.00" lengthAdjust="spacingAndGlyphs" fill="#4e4e4e" font-weight="normal" stroke="#f3f2ee" stroke-width="0.5" paint-order="stroke">隆盛镇</text>
<text x="332" y="122.83" font-size="7.67" textLength="13.00" lengthAdjust="spacingAndGlyphs" fill="#b8652e" font-weight="normal" stroke="#f3f2ee" stroke-width="0.5" paint-order="stroke">容县</text>
<text x="321" y="142.95" font-size="6.51" textLength="19.00" lengthAdjust="spacingAndGlyphs" fill="#4e4e4e" font-weight="normal" stroke="#f3f2ee" stroke-width="0.5" paint-order="stroke">石寨镇</text>
<text x="353" y="141.42" font-size="5.81" textLength="19.00" lengthAdjust="spacingAndGlyphs" fill="#4e4e4e" font-weight="normal" stroke="#f3f2ee" stroke-width="0.5" paint-order="stroke">六王镇</text>
<text x="347.4" y="189.30" font-size="6.98" textLength="18.60" lengthAdjust="spacingAndGlyphs" fill="#4e4e4e" font-weight="normal" stroke="#f3f2ee" stroke-width="0.5" paint-order="stroke">黎村镇</text>
<text x="213.6" y="208.30" font-size="6.98" textLength="18.80" lengthAdjust="spacingAndGlyphs" fill="#4e4e4e" font-weight="normal" stroke="#f3f2ee" stroke-width="0.5" paint-order="stroke">石和镇</text>
<text x="170" y="220.83" font-size="7.67" textLength="18.40" lengthAdjust="spacingAndGlyphs" fill="#4e4e4e" font-weight="normal" stroke="#f3f2ee" stroke-width="0.5" paint-order="stroke">戊凤镇</text>
<text x="207" y="227.26" font-size="7.44" textLength="19.00" lengthAdjust="spacingAndGlyphs" fill="#4e4e4e" font-weight="normal" stroke="#f3f2ee" stroke-width="0.5" paint-order="stroke">沙田镇</text>
<text x="204.4" y="250.83" font-size="7.67" textLength="21.20" lengthAdjust="spacingAndGlyphs" fill="#b8652e" font-weight="normal" stroke="#f3f2ee" stroke-width="0.5" paint-order="stroke">博白县</text>
<text x="143" y="242.30" font-size="6.98" textLength="20.75" lengthAdjust="spacingAndGlyphs" fill="#4e4e4e" font-weight="normal" stroke="#f3f2ee" stroke-width="0.5" paint-order="stroke">永安镇</text>
<text x="310" y="207.30" font-size="6.98" textLength="19.00" lengthAdjust="spacingAndGlyphs" fill="#4e4e4e" font-weight="normal" stroke="#f3f2ee" stroke-width="0.5" paint-order="stroke">新丰镇</text>
<text x="311" y="226.30" font-size="6.98" textLength="19.00" lengthAdjust="spacingAndGlyphs" fill="#4e4e4e" font-weight="normal" stroke="#f3f2ee" stroke-width="0.5" paint-order="stroke">平政镇</text>
<text x="267" y="240.19" font-size="8.14" textLength="21.00" lengthAdjust="spacingAndGlyphs" fill="#b8652e" font-weight="normal" stroke="#f3f2ee" stroke-width="0.5" paint-order="stroke">陆川县</text>
<text x="294" y="254.83" font-size="7.67" textLength="20.00" lengthAdjust="spacingAndGlyphs" fill="#4e4e4e" font-weight="normal" stroke="#f3f2ee" stroke-width="0.5" paint-order="stroke">石窝镇</text>
<text x="246" y="272.90" font-size="6.98" textLength="19.00" lengthAdjust="spacingAndGlyphs" fill="#4e4e4e" font-weight="normal" stroke="#f3f2ee" stroke-width="0.5" paint-order="stroke">乌石镇</text>
<text x="112" y="250.83" font-size="7.67" textLength="22.00" lengthAdjust="spacingAndGlyphs" fill="#b8652e" font-weight="normal" stroke="#f3f2ee" stroke-width="0.5" paint-order="stroke">浦北县</text>
<text x="115" y="276.19" font-size="8.14" textLength="18.00" lengthAdjust="spacingAndGlyphs" fill="#4e4e4e" font-weight="normal" stroke="#f3f2ee" stroke-width="0.5" paint-order="stroke">江宁镇</text>
<text x="173.6" y="287.61" font-size="7.91" textLength="19.40" lengthAdjust="spacingAndGlyphs" fill="#4e4e4e" font-weight="normal" stroke="#f3f2ee" stroke-width="0.5" paint-order="stroke">旺茂镇</text>
<text x="161" y="309.26" font-size="7.44" textLength="20.00" lengthAdjust="spacingAndGlyphs" fill="#4e4e4e" font-weight="normal" stroke="#f3f2ee" stroke-width="0.5" paint-order="stroke">东平镇</text>
<text x="223" y="304.80" font-size="6.98" textLength="19.00" lengthAdjust="spacingAndGlyphs" fill="#4e4e4e" font-weight="normal" stroke="#f3f2ee" stroke-width="0.5" paint-order="stroke">宁潭镇</text>
<text x="270.6" y="302.90" font-size="6.98" textLength="18.40" lengthAdjust="spacingAndGlyphs" fill="#4e4e4e" font-weight="normal" stroke="#f3f2ee" stroke-width="0.5" paint-order="stroke">清湖镇</text>
<text x="270.6" y="324.36" font-size="6.40" textLength="16.90" lengthAdjust="spacingAndGlyphs" fill="#4e4e4e" font-weight="normal" stroke="#f3f2ee" stroke-width="0.5" paint-order="stroke">古城镇</text>
<text x="141.3" y="334.77" font-size="8.26" textLength="21.30" lengthAdjust="spacingAndGlyphs" fill="#4e4e4e" font-weight="normal" stroke="#f3f2ee" stroke-width="0.5" paint-order="stroke">松旺镇</text>
<text x="182.4" y="334.77" font-size="8.26" textLength="19.80" lengthAdjust="spacingAndGlyphs" fill="#4e4e4e" font-weight="normal" stroke="#f3f2ee" stroke-width="0.5" paint-order="stroke">大垌镇</text>
<text x="140.8" y="367.92" font-size="7.79" textLength="19.80" lengthAdjust="spacingAndGlyphs" fill="#4e4e4e" font-weight="normal" stroke="#f3f2ee" stroke-width="0.5" paint-order="stroke">龙潭镇</text>
</svg>
<div class="a" id="panel"></div>
<div class="a ptitle" style="top:57.5px">模型分析</div>
<div class="a lbl" style="top:77.2px">预报日期</div>
<div class="a inp" style="top:73.3px"></div>
<div class="a itx" style="top:76.5px;font-size:6.1px">2023/07/18</div>
<svg class="a" style="left:567px;top:76.3px" width="7.5" height="6.5" viewBox="0 0 7.5 6.5"><rect x="0.4" y="1" width="6.7" height="5.2" fill="none" stroke="#3d5a9e" stroke-width="0.8"/><rect x="0.4" y="1" width="6.7" height="1.6" fill="#3d5a9e"/><rect x="1.6" y="0" width="0.8" height="1.5" fill="#3d5a9e"/><rect x="5.1" y="0" width="0.8" height="1.5" fill="#3d5a9e"/></svg>
<div class="a lbl" style="top:95.4px">预报类型</div>
<div class="a inp" style="top:92px;border-color:#bdbdbd;background:#f1f1f1"></div>
<div class="a itx" style="top:95.3px;color:#8a8a8a">辐射化报告（单天）</div>
<div class="a lbl" style="top:114.0px">预报时次</div>
<div class="a inp" style="top:110.6px"></div>
<div class="a itx" style="top:113.8px">08</div>
<svg class="a" style="left:567.8px;top:115.1px" width="6" height="3.5" viewBox="0 0 6 3.5"><polyline points="0.5,0.5 3,3 5.5,0.5" fill="none" stroke="#4f67a6" stroke-width="0.7"/></svg>
<div class="a cb" style="left:485.6px;top:128.6px"></div>
<div class="a lbl" style="left:496px;top:128.6px">单天分析</div>
<div class="a lbl" style="top:144.4px">预报时效</div>
<div class="a inp" style="top:140.6px"></div>
<div class="a itx" style="top:143.8px">1-3天</div>
<svg class="a" style="left:567.8px;top:145.1px" width="6" height="3.5" viewBox="0 0 6 3.5"><polyline points="0.5,0.5 3,3 5.5,0.5" fill="none" stroke="#4f67a6" stroke-width="0.7"/></svg>
<div class="a lbl" style="top:162.8px">实际雨量</div>
<div class="a inp" style="top:158.7px"></div>
<div class="a itx" style="top:162px">截止当前时间</div>
<svg class="a" style="left:567.8px;top:163.3px" width="6" height="3.5" viewBox="0 0 6 3.5"><polyline points="0.5,0.5 3,3 5.5,0.5" fill="none" stroke="#4f67a6" stroke-width="0.7"/></svg>
<div class="a cb" style="left:485.6px;top:180px"></div>
<div class="a lbl" style="left:496px;top:180.2px">面积过滤</div>
<div class="a inp" style="left:525.6px;width:28.8px;top:177.6px;border-color:#c8c8c8;background:#ececec"></div>
<div class="a lbl" style="left:556px;top:180.2px">平方公里</div>
<div class="a cb" style="left:485.6px;top:195.4px"></div>
<div class="a lbl" style="left:496px;top:195.6px">圆形</div>
<div class="a cb" style="left:525.6px;top:195.4px"></div>
<div class="a lbl" style="left:536px;top:195.6px">显示格点</div>
<div class="a btn" style="left:498px;top:207px;width:81.4px;background:linear-gradient(90deg,#213f85,#3a5fae)">预警分析</div>
<div class="a ptitle" style="top:229.8px">手动标绘</div>
<svg class="a" style="left:486px;top:243px" width="6" height="6" viewBox="0 0 6 6"><circle cx="3" cy="3" r="2.6" fill="#fff" stroke="#445c9a" stroke-width="0.6"/><circle cx="3" cy="3" r="1.3" fill="#2b4a8a"/></svg>
<div class="a sw" style="left:494px;top:242.6px;background:#1a6ef5"></div>
<svg class="a" style="left:514.6px;top:243px" width="6" height="6" viewBox="0 0 6 6"><circle cx="3" cy="3" r="2.6" fill="#fff" stroke="#445c9a" stroke-width="0.6"/></svg>
<div class="a sw" style="left:523px;top:242.6px;background:#f0dc00"></div>
<svg class="a" style="left:543.3px;top:243px" width="6" height="6" viewBox="0 0 6 6"><circle cx="3" cy="3" r="2.6" fill="#fff" stroke="#445c9a" stroke-width="0.6"/></svg>
<div class="a sw" style="left:551.6px;top:242.6px;background:#ff9a2e"></div>
<svg class="a" style="left:572px;top:243px" width="6" height="6" viewBox="0 0 6 6"><circle cx="3" cy="3" r="2.6" fill="#fff" stroke="#445c9a" stroke-width="0.6"/></svg>
<div class="a sw" style="left:580.6px;top:242.6px;background:#cc0000"></div>
<div class="a btn" style="left:498.2px;top:256.5px;width:31px">分析成图</div>
<div class="a btn" style="left:548px;top:256.5px;width:31px">拓扑分析</div>
<div class="a btn" style="left:498.2px;top:272.3px;width:81px">添加分析成果到绘区</div>
<div class="a ptitle" style="top:295px">预警调整</div>
<div class="a btn" style="left:498.2px;top:308.3px;width:31px">行政区划</div>
<div class="a btn" style="left:548px;top:308.3px;width:31px">修改预警区</div>
<div class="a btn" style="left:498.2px;top:324.2px;width:31px;background:linear-gradient(90deg,#e6e000 0%,#8a9a50 35%,#2a4e9c 70%)">更新预警区</div>
<div class="a btn" style="left:548px;top:324.2px;width:31px;background:linear-gradient(90deg,#d40000 0%,#8a2a50 40%,#2a4e9c 75%)">清空预警区</div>
<div class="a ptitle" style="top:347.7px">预警确认</div>
<div class="a btn" style="left:486.6px;top:361px;width:31px">绘图区确认</div>
<div class="a btn" style="left:523.6px;top:361px;width:30.8px">修改预警区</div>
<div class="a btn" style="left:560.4px;top:361px;width:30.6px">提交审核</div>
<div class="a btn" style="left:508px;top:379.6px;width:25px">上一幅</div>
<div class="a btn" style="left:545px;top:379.6px;width:24.6px">下一幅</div>
</body></html>
